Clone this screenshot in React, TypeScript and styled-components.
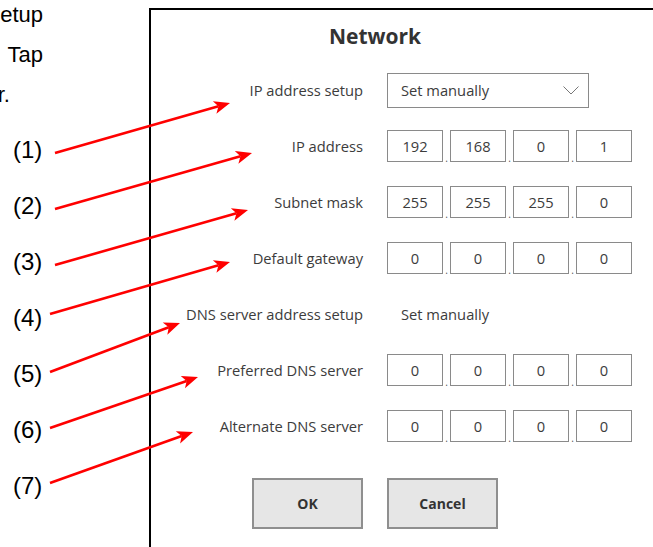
import React from "react";
import styled, { createGlobalStyle } from "styled-components";

const GlobalStyle = createGlobalStyle`
  html, body {
    margin: 0;
    padding: 0;
    background: #fff;
  }
  body {
    width: 653px;
    height: 547px;
    overflow: hidden;
  }
`;

const Page = styled.div`
  position: relative;
  display: flex;
  width: 653px;
  height: 547px;
  font-family: "Liberation Sans", Arial, sans-serif;
`;

const Gutter = styled.div`
  width: 149px;
  flex-shrink: 0;
  display: flex;
  flex-direction: column;
`;

const Snippet = styled.div`
  width: 43px;
  margin-top: -5px;
  overflow: hidden;
  display: flex;
  flex-direction: column;
  align-items: flex-end;
  font-size: 22px;
  line-height: 40px;
  color: #000;
`;

const SnippetLine = styled.span<{ $inset?: number }>`
  white-space: nowrap;
  margin-right: ${({ $inset }) => $inset || 0}px;
`;

const Markers = styled.ol`
  list-style: none;
  margin: 7px 0 0;
  padding: 0 0 0 13px;
  font-size: 24px;
  line-height: 56px;
  color: #000;
`;

const Dialog = styled.section`
  flex: 1;
  margin-top: 8px;
  border-top: 2px solid #000;
  border-left: 2px solid #000;
  font-family: "Open Sans", "Noto Sans", sans-serif;
  color: #3c3c3c;
`;

const Title = styled.h1`
  margin: 11px 0 0 178px;
  font-size: 21px;
  line-height: 30px;
  font-weight: 700;
  color: #333;
`;

const Form = styled.div`
  display: grid;
  grid-template-columns: 192px 245px;
  grid-auto-rows: 56px;
  column-gap: 24px;
  align-items: center;
  margin: 11px 0 0 20px;
`;

const Label = styled.div`
  justify-self: end;
  font-size: 14.7px;
  white-space: nowrap;
`;

const Value = styled.div`
  padding-left: 14px;
  font-size: 14.7px;
`;

const Select = styled.div`
  box-sizing: border-box;
  width: 202px;
  height: 35px;
  display: flex;
  align-items: center;
  justify-content: space-between;
  padding: 0 9px 0 13px;
  border: 1px solid #8a8a8a;
  font-size: 14.7px;
`;

const Octets = styled.div`
  display: flex;
  align-items: flex-end;
`;

const OctetBox = styled.div`
  box-sizing: border-box;
  width: 56px;
  height: 32px;
  display: flex;
  align-items: center;
  justify-content: center;
  border: 1px solid #8a8a8a;
  font-size: 14.7px;
`;

const Dot = styled.span`
  width: 7px;
  text-align: center;
  font-size: 10px;
  line-height: 8px;
  color: #555;
`;

const Buttons = styled.div`
  display: grid;
  grid-template-columns: 192px 245px;
  column-gap: 24px;
  margin: 24px 0 0 20px;
`;

const Button = styled.button<{ $side: "end" | "start" }>`
  justify-self: ${({ $side }) => $side};
  width: 111px;
  height: 51px;
  background: #e6e6e6;
  border: 2px solid #8f8f8f;
  font-family: "Open Sans", "Noto Sans", sans-serif;
  font-size: 14px;
  font-weight: 700;
  color: #333;
`;

const Callouts = styled.svg`
  position: absolute;
  left: 0;
  top: 0;
  pointer-events: none;
`;

const arrows: [number, number, number, number][] = [
  [55, 153, 230, 103],
  [55, 209, 252, 153],
  [55, 265, 248, 210],
  [50, 314, 230, 262],
  [50, 372, 180, 323],
  [50, 428, 198, 377],
  [50, 483, 193, 432],
];

const Arrow: React.FC<{ a: [number, number, number, number] }> = ({ a }) => {
  const [x1, y1, x2, y2] = a;
  const dx = x2 - x1;
  const dy = y2 - y1;
  const len = Math.hypot(dx, dy);
  const ux = dx / len;
  const uy = dy / len;
  const nx = -uy;
  const ny = ux;
  const L = 16;
  const W = 6.5;
  const N = 4;
  const bx = x2 - ux * L;
  const by = y2 - uy * L;
  const mx = x2 - ux * (L - N);
  const my = y2 - uy * (L - N);
  const pts = [
    [x2, y2],
    [bx + nx * W, by + ny * W],
    [mx, my],
    [bx - nx * W, by - ny * W],
  ]
    .map((p) => p.join(","))
    .join(" ");
  return (
    <g>
      <line x1={x1} y1={y1} x2={mx} y2={my} stroke="#ff0000" strokeWidth={2.6} />
      <polygon points={pts} fill="#ff0000" />
    </g>
  );
};

const Chevron = () => (
  <svg width="16" height="9" viewBox="0 0 16 9">
    <polyline points="0.5,0.5 8,8 15.5,0.5" fill="none" stroke="#777" strokeWidth="1" />
  </svg>
);

const Address: React.FC<{ parts: string[] }> = ({ parts }) => (
  <Octets>
    {parts.map((p, i) => (
      <React.Fragment key={i}>
        {i > 0 && <Dot>.</Dot>}
        <OctetBox>{p}</OctetBox>
      </React.Fragment>
    ))}
  </Octets>
);

const zeros = ["0", "0", "0", "0"];

export default function App() {
  return (
    <Page>
      <GlobalStyle />
      <Gutter>
        <Snippet>
          <SnippetLine>Complete the network setup</SnippetLine>
          <SnippetLine>{"as shown below.\u00a0\u00a0Tap"}</SnippetLine>
          <SnippetLine $inset={33}>the router.</SnippetLine>
        </Snippet>
        <Markers>
          {[1, 2, 3, 4, 5, 6, 7].map((n) => (
            <li key={n}>({n})</li>
          ))}
        </Markers>
      </Gutter>

      <Dialog>
        <Title>Network</Title>
        <Form>
          <Label>IP address setup</Label>
          <Select>
            <span>Set manually</span>
            <Chevron />
          </Select>

          <Label>IP address</Label>
          <Address parts={["192", "168", "0", "1"]} />

          <Label>Subnet mask</Label>
          <Address parts={["255", "255", "255", "0"]} />

          <Label>Default gateway</Label>
          <Address parts={zeros} />

          <Label>DNS server address setup</Label>
          <Value>Set manually</Value>

          <Label>Preferred DNS server</Label>
          <Address parts={zeros} />

          <Label>Alternate DNS server</Label>
          <Address parts={zeros} />
        </Form>
        <Buttons>
          <Button $side="end">OK</Button>
          <Button $side="start">Cancel</Button>
        </Buttons>
      </Dialog>

      <Callouts width="653" height="547" viewBox="0 0 653 547">
        {arrows.map((a, i) => (
          <Arrow key={i} a={a} />
        ))}
      </Callouts>
    </Page>
  );
}
